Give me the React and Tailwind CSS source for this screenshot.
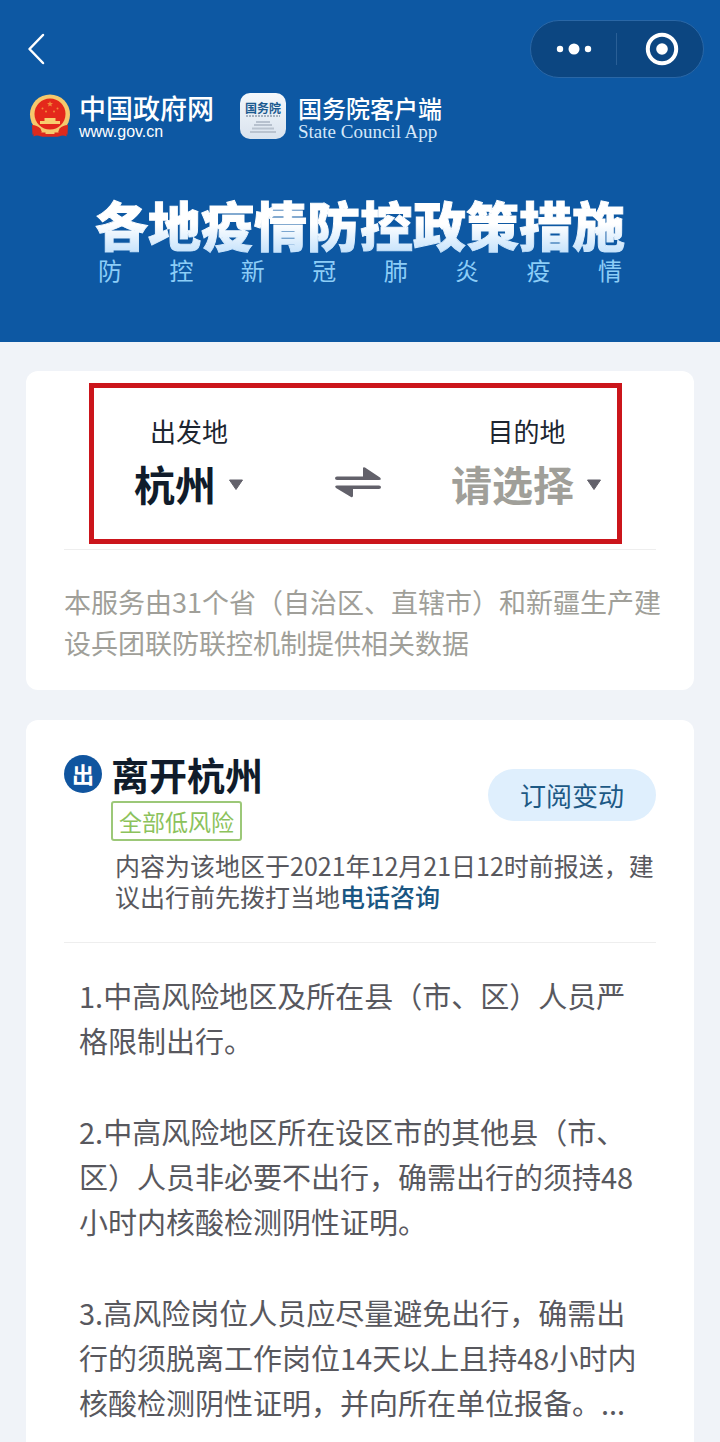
import { useState } from "react"

const SUBTITLE = ["防", "控", "新", "冠", "肺", "炎", "疫", "情"]

const MEASURES = [
  "1.中高风险地区及所在县（市、区）人员严格限制出行。",
  "2.中高风险地区所在设区市的其他县（市、区）人员非必要不出行，确需出行的须持48小时内核酸检测阴性证明。",
  "3.高风险岗位人员应尽量避免出行，确需出行的须脱离工作岗位14天以上且持48小时内核酸检测阴性证明，并向所在单位报备。...",
]

function Emblem() {
  return (
    <svg viewBox="0 0 42 44" className="h-11 w-[42px]" aria-hidden="true">
      <path d="M4 30 H38 L37.500 42.500 Q34 40.500 30 42.500 H12 Q8 40.500 4.500 42.500 Z" fill="#dc2a1d" />
      <circle cx="21" cy="20.500" r="20" fill="#f6c96c" />
      <circle cx="21" cy="20" r="15.500" fill="#e4281b" />
      <path
        d="M21 7 l.8 2 2.200 .1 -1.700 1.400 .6 2.100 -1.900 -1.200 -1.900 1.200 .6 -2.100 -1.700 -1.400 2.200 -.1 Z"
        fill="#f08a3a"
      />
      <g fill="#f08a3a">
        <circle cx="13.500" cy="14.500" r="1" />
        <circle cx="28.500" cy="14.500" r="1" />
        <circle cx="17" cy="17.500" r="1" />
        <circle cx="25" cy="17.500" r="1" />
      </g>
      <path d="M15.500 24 h11 v3 h4.500 v3 h-20 v-3 h4.500 Z" fill="#f8cf6e" />
      <path d="M3 31 Q8 31 11.500 34.500 L13 38.500 Q9 38.500 6 38 L3.500 41 Z" fill="#dc2a1d" />
      <path d="M39 31 Q34 31 30.500 34.500 L29 38.500 Q33 38.500 36 38 L38.500 41 Z" fill="#dc2a1d" />
      <path d="M13 38.500 h3.500 v1.500 h9 v-1.500 h3.500 v4 h-16 Z" fill="#dc2a1d" />
    </svg>
  )
}

function CouncilIcon() {
  return (
    <span className="flex h-[46px] w-[46px] flex-col items-center rounded-[10px] bg-linear-to-b from-[#f4f8fc] to-[#d9e3ee] pt-2">
      <span className="text-[12px] leading-[13px] font-bold text-[#1b5a8f]">国务院</span>
      <svg viewBox="0 0 36 20" className="h-5 w-9" aria-hidden="true">
        <path d="M1 2 h34" stroke="#8d9db0" strokeWidth="1.500" strokeDasharray="2 1" />
        <path d="M11 8 h14 M9 11 h18" stroke="#a9b4c2" strokeWidth="1.500" />
        <path d="M7 14.500 h22 M5 18 h26" stroke="#b9c3cf" strokeWidth="2" />
      </svg>
    </span>
  )
}

function PlaceSelect({ id, label, options, className }) {
  const [value, setValue] = useState(options[0])

  return (
    <div className="flex flex-col items-center">
      <label htmlFor={id} className="text-[26px] leading-10 text-[#1c2530]">
        {label}
      </label>
      <div className="flex items-center gap-3">
        <select
          id={id}
          value={value}
          onChange={(e) => setValue(e.target.value)}
          className={`h-16 appearance-none bg-transparent text-[41px] leading-[60px] font-bold ${className}`}
        >
          {options.map((option) => (
            <option key={option}>{option}</option>
          ))}
        </select>
        <svg viewBox="0 0 16 12" className="pointer-events-none mt-1 h-3 w-4" aria-hidden="true">
          <path d="M1.500 1 h13 L8 10.500 Z" fill="#62616a" stroke="#62616a" strokeLinejoin="round" />
        </svg>
      </div>
    </div>
  )
}

function Header() {
  return (
    <header className="bg-[#0d58a3] pt-5 pb-14 text-white">
      <div className="flex items-center justify-between pr-4 pl-6">
        <button type="button" aria-label="返回" className="flex h-10 w-6 items-center justify-center">
          <svg viewBox="0 0 18 32" className="h-8 w-[18px]" fill="none" aria-hidden="true">
            <path
              d="M16 2 L2.500 16 L16 30"
              stroke="currentColor"
              strokeWidth="2.500"
              strokeLinecap="round"
              strokeLinejoin="round"
            />
          </svg>
        </button>
        <div className="flex h-[58px] w-[174px] items-center rounded-full border border-[#2a67a6] bg-[#0c4681]">
          <button type="button" aria-label="更多" className="flex h-full w-1/2 items-center justify-center">
            <svg viewBox="0 0 36 12" className="h-3 w-9" fill="currentColor" aria-hidden="true">
              <circle cx="4" cy="6" r="3.200" />
              <circle cx="18" cy="6" r="5.500" />
              <circle cx="32" cy="6" r="3.200" />
            </svg>
          </button>
          <span className="h-8 w-px bg-[#2a5f96]" />
          <button type="button" aria-label="关闭" className="flex h-full w-1/2 items-center justify-center pl-1">
            <svg viewBox="0 0 34 34" className="h-[34px] w-[34px]" aria-hidden="true">
              <circle cx="17" cy="17" r="14.200" fill="none" stroke="currentColor" strokeWidth="4" />
              <circle cx="17" cy="17" r="5.800" fill="currentColor" />
            </svg>
          </button>
        </div>
      </div>

      <div className="mt-[14px] flex items-center gap-[26px] pl-[29px]">
        <div className="flex items-center gap-2">
          <Emblem />
          <div>
            <p className="text-[27px] leading-8 font-medium">中国政府网</p>
            <p className="font-['Liberation_Sans',sans-serif] text-[16px] leading-4">www.gov.cn</p>
          </div>
        </div>
        <div className="flex items-center gap-3">
          <CouncilIcon />
          <div>
            <p className="text-[24px] leading-8 font-medium">国务院客户端</p>
            <p className="font-['Liberation_Serif',serif] text-[19px] leading-4 text-[#d5e8fa]">
              State Council App
            </p>
          </div>
        </div>
      </div>

      <div className="mx-auto mt-[54px] w-fit">
        <h1 className="bg-linear-to-b from-white from-50% to-[#c3e1fb] bg-clip-text text-[53px] leading-[60px] font-black text-transparent [-webkit-text-stroke:1px_transparent]">
          各地疫情防控政策措施
        </h1>
        <p className="flex justify-between px-[3px] text-[24px] leading-8 text-[#8ccdf7]">
          {SUBTITLE.map((char) => (
            <span key={char}>{char}</span>
          ))}
        </p>
      </div>
    </header>
  )
}

function RouteCard() {
  return (
    <section className="rounded-xl bg-white px-[38px] pt-3 pb-[27px]">
      <div className="mr-[34px] ml-[25px] flex items-center border-[5px] border-[#cb151b] pt-[23px] pr-[15px] pb-6 pl-10">
        <PlaceSelect id="from" label="出发地" options={["杭州"]} className="text-[#101c2b]" />
        <button type="button" aria-label="交换" className="mt-[38px] ml-[90px]">
          <svg viewBox="0 0 48 32" className="h-8 w-12" fill="#62616a" aria-hidden="true">
            <path d="M3 10.500 H29 V2.500 Q29 0.500 31 1.500 L46 11.500 Q48 14 45 14 H3 Q1 14 1 12.200 Q1 10.500 3 10.500 Z" />
            <path d="M45 19.500 H3 Q0 19.500 2 22 L17 31 Q19 32 19 29.500 V23 H45 Q47 23 47 21.200 Q47 19.500 45 19.500 Z" />
          </svg>
        </button>
        <div className="ml-auto">
          <PlaceSelect id="to" label="目的地" options={["请选择"]} className="text-[#a09f99]" />
        </div>
      </div>
      <hr className="mt-[5px] border-[#eeeeee]" />
      <p className="-mr-2 mt-[31px] text-[27px] leading-[41px] text-[#a09f99]">
        本服务由31个省（自治区、直辖市）和新疆生产建设兵团联防联控机制提供相关数据
      </p>
    </section>
  )
}

function DepartureCard() {
  return (
    <section className="rounded-xl bg-white px-[38px] pt-[30px] pb-10">
      <div className="flex items-start justify-between">
        <div className="flex items-start gap-[9px]">
          <span className="mt-[5px] flex h-[38px] w-[38px] items-center justify-center rounded-full bg-[#10559f] pb-[2px] text-[22px] leading-none font-bold text-white">
            出
          </span>
          <div>
            <h2 className="text-[38px] leading-[48px] font-bold text-[#101c2b]">离开杭州</h2>
            <span className="mt-[3px] block w-fit rounded-[3px] border-2 border-[#9cc878] px-[6px] text-[23px] leading-9 text-[#8cc25c]">
              全部低风险
            </span>
          </div>
        </div>
        <button
          type="button"
          className="mt-[19px] rounded-full bg-[#dfeffd] px-8 text-[26px] leading-[52px] text-[#1d5985]"
        >
          订阅变动
        </button>
      </div>
      <p className="mt-[9px] pl-[51px] text-[25px] leading-[31px] text-[#58585e]">
        内容为该地区于2021年12月21日12时前报送，建议出行前先拨打当地
        <a href="#phone" className="font-medium text-[#1a5682]">
          电话咨询
        </a>
      </p>
      <hr className="mt-[30px] border-[#eeeeee]" />
      <div className="mt-[30px] flex flex-col gap-[46px] pr-3 pl-[15px] text-[29px] leading-[45px] text-[#58585e]">
        {MEASURES.map((text) => (
          <p key={text}>{text}</p>
        ))}
      </div>
    </section>
  )
}

export default function App() {
  return (
    <div lang="zh-CN" className="min-h-screen bg-[#f0f3f8] font-['Noto_Sans_CJK_SC',sans-serif]">
      <Header />
      <main className="flex flex-col gap-[30px] px-[26px] pt-[29px]">
        <RouteCard />
        <DepartureCard />
      </main>
    </div>
  )
}
